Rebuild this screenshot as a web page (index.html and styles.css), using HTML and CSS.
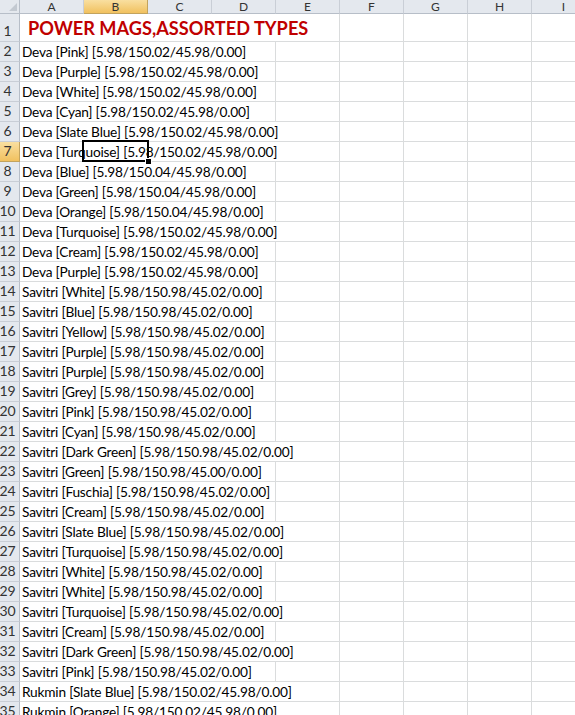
FILE: index.html
```html
<!DOCTYPE html>
<html lang="en">
<head>
  <meta charset="UTF-8">
  <title>Power Mags</title>
  <link rel="stylesheet" href="styles.css">
</head>
<body>
  <div class="sheet">
    <div class="row head">
      <div class="corner"></div>
      <div class="col">A</div><div class="col active">B</div><div class="col">C</div>
      <div class="col">D</div><div class="col">E</div><div class="col">F</div>
      <div class="col">G</div><div class="col">H</div><div class="col">I</div>
    </div>

    <div class="row first">
      <div class="num">1</div>
      <div class="cell title span5">POWER MAGS,ASSORTED TYPES</div>
      <div class="cell"></div><div class="cell"></div><div class="cell"></div><div class="cell"></div>
    </div>

    <div class="row"><div class="num">2</div><div class="cell span4">Deva [Pink] [5.98/150.02/45.98/0.00]</div><div class="cell"></div><div class="cell"></div><div class="cell"></div><div class="cell"></div><div class="cell"></div></div>
    <div class="row"><div class="num">3</div><div class="cell span4">Deva [Purple] [5.98/150.02/45.98/0.00]</div><div class="cell"></div><div class="cell"></div><div class="cell"></div><div class="cell"></div><div class="cell"></div></div>
    <div class="row"><div class="num">4</div><div class="cell span4">Deva [White] [5.98/150.02/45.98/0.00]</div><div class="cell"></div><div class="cell"></div><div class="cell"></div><div class="cell"></div><div class="cell"></div></div>
    <div class="row"><div class="num">5</div><div class="cell span4">Deva [Cyan] [5.98/150.02/45.98/0.00]</div><div class="cell"></div><div class="cell"></div><div class="cell"></div><div class="cell"></div><div class="cell"></div></div>
    <div class="row"><div class="num">6</div><div class="cell span5">Deva [Slate Blue] [5.98/150.02/45.98/0.00]</div><div class="cell"></div><div class="cell"></div><div class="cell"></div><div class="cell"></div></div>
    <div class="row"><div class="num active">7</div><div class="cell span5">Deva [Turquoise] [5.98/150.02/45.98/0.00]</div><div class="cell"></div><div class="cell"></div><div class="cell"></div><div class="cell"></div></div>
    <div class="row"><div class="num">8</div><div class="cell span4">Deva [Blue] [5.98/150.04/45.98/0.00]</div><div class="cell"></div><div class="cell"></div><div class="cell"></div><div class="cell"></div><div class="cell"></div></div>
    <div class="row"><div class="num">9</div><div class="cell span4">Deva [Green] [5.98/150.04/45.98/0.00]</div><div class="cell"></div><div class="cell"></div><div class="cell"></div><div class="cell"></div><div class="cell"></div></div>
    <div class="row"><div class="num">10</div><div class="cell span4">Deva [Orange] [5.98/150.04/45.98/0.00]</div><div class="cell"></div><div class="cell"></div><div class="cell"></div><div class="cell"></div><div class="cell"></div></div>
    <div class="row"><div class="num">11</div><div class="cell span5">Deva [Turquoise] [5.98/150.02/45.98/0.00]</div><div class="cell"></div><div class="cell"></div><div class="cell"></div><div class="cell"></div></div>
    <div class="row"><div class="num">12</div><div class="cell span4">Deva [Cream] [5.98/150.02/45.98/0.00]</div><div class="cell"></div><div class="cell"></div><div class="cell"></div><div class="cell"></div><div class="cell"></div></div>
    <div class="row"><div class="num">13</div><div class="cell span4">Deva [Purple] [5.98/150.02/45.98/0.00]</div><div class="cell"></div><div class="cell"></div><div class="cell"></div><div class="cell"></div><div class="cell"></div></div>
    <div class="row"><div class="num">14</div><div class="cell span4">Savitri [White] [5.98/150.98/45.02/0.00]</div><div class="cell"></div><div class="cell"></div><div class="cell"></div><div class="cell"></div><div class="cell"></div></div>
    <div class="row"><div class="num">15</div><div class="cell span4">Savitri [Blue] [5.98/150.98/45.02/0.00]</div><div class="cell"></div><div class="cell"></div><div class="cell"></div><div class="cell"></div><div class="cell"></div></div>
    <div class="row"><div class="num">16</div><div class="cell span4">Savitri [Yellow] [5.98/150.98/45.02/0.00]</div><div class="cell"></div><div class="cell"></div><div class="cell"></div><div class="cell"></div><div class="cell"></div></div>
    <div class="row"><div class="num">17</div><div class="cell span4">Savitri [Purple] [5.98/150.98/45.02/0.00]</div><div class="cell"></div><div class="cell"></div><div class="cell"></div><div class="cell"></div><div class="cell"></div></div>
    <div class="row"><div class="num">18</div><div class="cell span4">Savitri [Purple] [5.98/150.98/45.02/0.00]</div><div class="cell"></div><div class="cell"></div><div class="cell"></div><div class="cell"></div><div class="cell"></div></div>
    <div class="row"><div class="num">19</div><div class="cell span4">Savitri [Grey] [5.98/150.98/45.02/0.00]</div><div class="cell"></div><div class="cell"></div><div class="cell"></div><div class="cell"></div><div class="cell"></div></div>
    <div class="row"><div class="num">20</div><div class="cell span4">Savitri [Pink] [5.98/150.98/45.02/0.00]</div><div class="cell"></div><div class="cell"></div><div class="cell"></div><div class="cell"></div><div class="cell"></div></div>
    <div class="row"><div class="num">21</div><div class="cell span4">Savitri [Cyan] [5.98/150.98/45.02/0.00]</div><div class="cell"></div><div class="cell"></div><div class="cell"></div><div class="cell"></div><div class="cell"></div></div>
    <div class="row"><div class="num">22</div><div class="cell span5">Savitri [Dark Green] [5.98/150.98/45.02/0.00]</div><div class="cell"></div><div class="cell"></div><div class="cell"></div><div class="cell"></div></div>
    <div class="row"><div class="num">23</div><div class="cell span4">Savitri [Green] [5.98/150.98/45.00/0.00]</div><div class="cell"></div><div class="cell"></div><div class="cell"></div><div class="cell"></div><div class="cell"></div></div>
    <div class="row"><div class="num">24</div><div class="cell span4">Savitri [Fuschia] [5.98/150.98/45.02/0.00]</div><div class="cell"></div><div class="cell"></div><div class="cell"></div><div class="cell"></div><div class="cell"></div></div>
    <div class="row"><div class="num">25</div><div class="cell span4">Savitri [Cream] [5.98/150.98/45.02/0.00]</div><div class="cell"></div><div class="cell"></div><div class="cell"></div><div class="cell"></div><div class="cell"></div></div>
    <div class="row"><div class="num">26</div><div class="cell span5">Savitri [Slate Blue] [5.98/150.98/45.02/0.00]</div><div class="cell"></div><div class="cell"></div><div class="cell"></div><div class="cell"></div></div>
    <div class="row"><div class="num">27</div><div class="cell span5">Savitri [Turquoise] [5.98/150.98/45.02/0.00]</div><div class="cell"></div><div class="cell"></div><div class="cell"></div><div class="cell"></div></div>
    <div class="row"><div class="num">28</div><div class="cell span4">Savitri [White] [5.98/150.98/45.02/0.00]</div><div class="cell"></div><div class="cell"></div><div class="cell"></div><div class="cell"></div><div class="cell"></div></div>
    <div class="row"><div class="num">29</div><div class="cell span4">Savitri [White] [5.98/150.98/45.02/0.00]</div><div class="cell"></div><div class="cell"></div><div class="cell"></div><div class="cell"></div><div class="cell"></div></div>
    <div class="row"><div class="num">30</div><div class="cell span5">Savitri [Turquoise] [5.98/150.98/45.02/0.00]</div><div class="cell"></div><div class="cell"></div><div class="cell"></div><div class="cell"></div></div>
    <div class="row"><div class="num">31</div><div class="cell span4">Savitri [Cream] [5.98/150.98/45.02/0.00]</div><div class="cell"></div><div class="cell"></div><div class="cell"></div><div class="cell"></div><div class="cell"></div></div>
    <div class="row"><div class="num">32</div><div class="cell span5">Savitri [Dark Green] [5.98/150.98/45.02/0.00]</div><div class="cell"></div><div class="cell"></div><div class="cell"></div><div class="cell"></div></div>
    <div class="row"><div class="num">33</div><div class="cell span4">Savitri [Pink] [5.98/150.98/45.02/0.00]</div><div class="cell"></div><div class="cell"></div><div class="cell"></div><div class="cell"></div><div class="cell"></div></div>
    <div class="row"><div class="num">34</div><div class="cell span5">Rukmin [Slate Blue] [5.98/150.02/45.98/0.00]</div><div class="cell"></div><div class="cell"></div><div class="cell"></div><div class="cell"></div></div>
    <div class="row"><div class="num">35</div><div class="cell span5">Rukmin [Orange] [5.98/150.02/45.98/0.00]</div><div class="cell"></div><div class="cell"></div><div class="cell"></div><div class="cell"></div></div>

    <!-- active cell B7 -->
    <div class="selection"><span class="handle"></span></div>
  </div>
</body>
</html>
```

FILE: styles.css
```css
:root {
  --grid: #dadcdd;
  --head-bg: #e4e8ee;
  --head-line: #b7bec8;
  --head-text: #333;
}

html, body {
  margin: 0;
  overflow: hidden;
  background: #fff;
}

.sheet {
  position: relative;
  width: 596px;
  font-family: Lato, "Open Sans", sans-serif;
  font-size: 13.7px;
  letter-spacing: -0.2px;
  color: #000;
}

.row {
  display: grid;
  grid-template-columns: 20px repeat(9, 64px);
  height: 20px;
}

.row.head {
  height: 14px;
}

.row.first {
  height: 28px;
}

.corner,
.col,
.num {
  background: var(--head-bg);
  border-right: 1px solid var(--head-line);
  border-bottom: 1px solid var(--head-line);
  color: var(--head-text);
  box-sizing: border-box;
  letter-spacing: 0;
}

.corner {
  position: relative;
}

.corner::after {
  content: "";
  position: absolute;
  right: 2px;
  bottom: 2px;
  border-style: solid;
  border-width: 0 0 8px 8px;
  border-color: transparent transparent #c3c9d1 transparent;
}

.col {
  display: flex;
  justify-content: center;
  align-items: center;
  font-size: 12px;
  line-height: 13px;
  border-right-color: #c9ced6;
}

.num {
  display: flex;
  align-items: flex-end;
  justify-content: center;
  padding: 0 4px 2px 0;
  font-size: 14px;
  border-bottom-color: #c9ced6;
}

.col.active,
.num.active {
  background: linear-gradient(#f9dfa0, #f1c15f);
  border-color: #c2a35e;
}

.cell {
  border-right: 1px solid var(--grid);
  border-bottom: 1px solid var(--grid);
  box-sizing: border-box;
  display: flex;
  align-items: flex-end;
  padding: 0 0 1px 2px;
  white-space: nowrap;
  overflow: hidden;
}

.span4 { grid-column: span 4; }
.span5 { grid-column: span 5; }

.title {
  padding-left: 8px;
  padding-bottom: 2px;
  font-weight: bold;
  font-size: 18.2px;
  letter-spacing: 0;
  color: #c00000;
}

.selection {
  position: absolute;
  left: 82px;
  top: 140px;
  width: 67px;
  height: 22px;
  border: 2px solid #000;
  box-sizing: border-box;
}

.handle {
  position: absolute;
  right: -5px;
  bottom: -5px;
  width: 5px;
  height: 5px;
  background: #000;
  border: 1px solid #fff;
}
```
